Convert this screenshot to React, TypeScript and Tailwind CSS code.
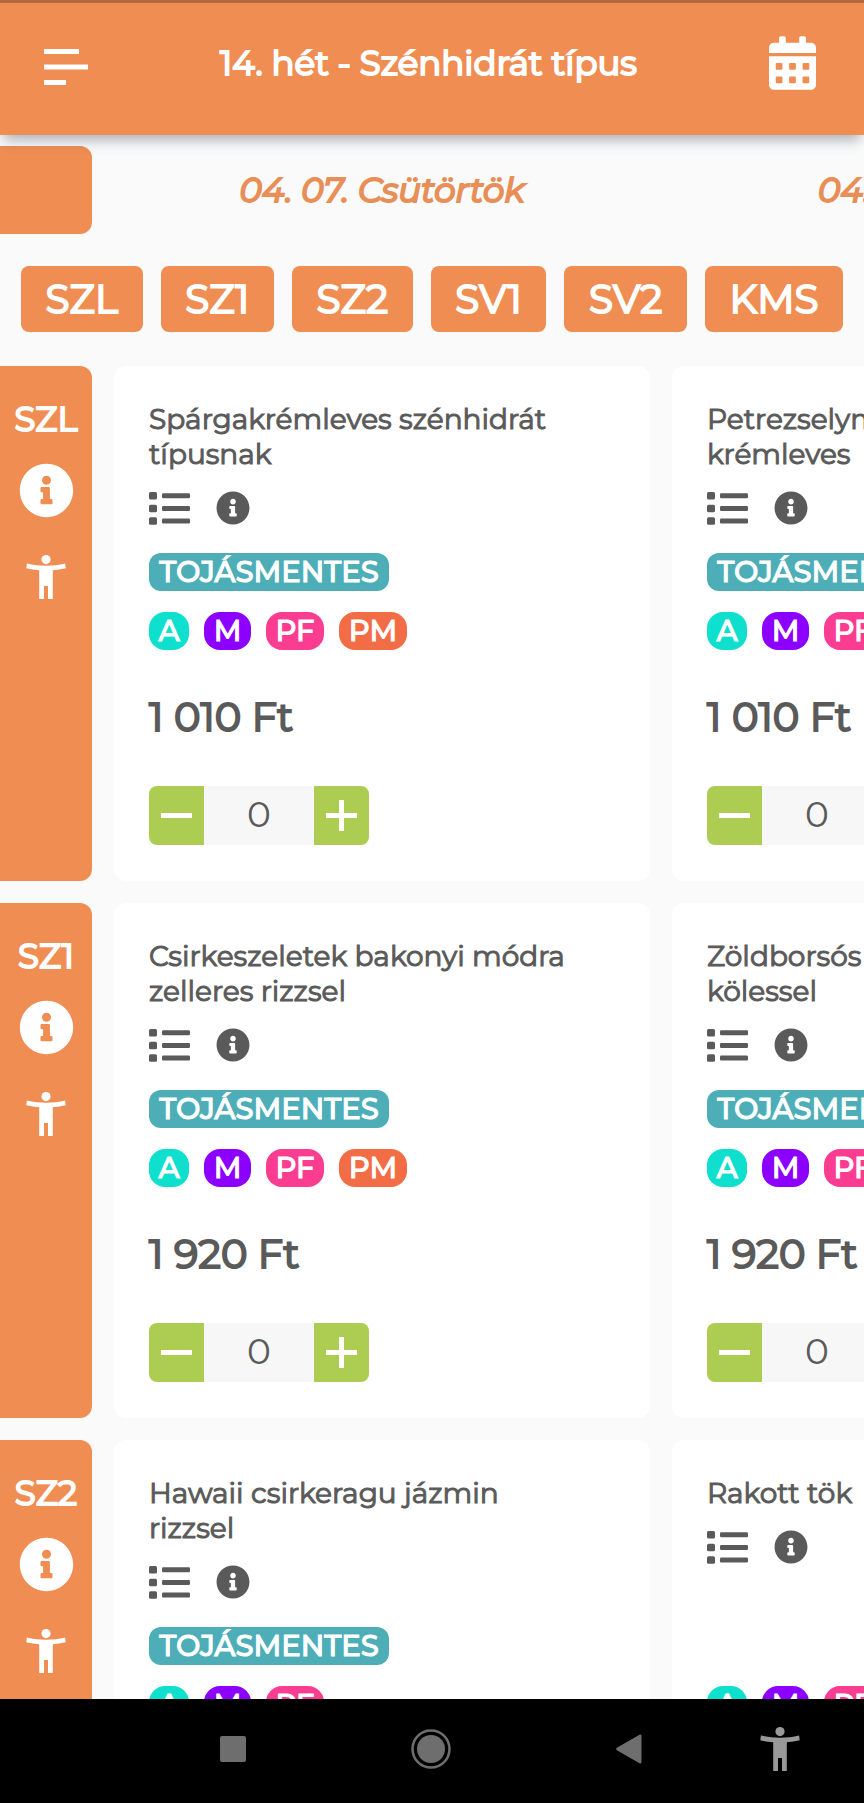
import { useState } from 'react'
import { FaCalendarAlt, FaInfoCircle } from 'react-icons/fa'

type Dish = {
  name: string
  price: string
  eggFree: boolean
  diets: Diet[]
}

type Diet = 'A' | 'M' | 'PF' | 'PM'

type MealRow = {
  code: string
  dishes: Dish[]
}

const days = ['04. 07. Csütörtök', '04. 08. Péntek']

const categories = ['SZL', 'SZ1', 'SZ2', 'SV1', 'SV2', 'KMS']

const dietStyles: Record<Diet, string> = {
  A: 'w-10 bg-[#0fdfcd]',
  M: 'w-[47px] bg-[#8b00ff]',
  PF: 'w-[58px] bg-[#fb3d92]',
  PM: 'w-[68px] bg-[#f26c45]',
}

const rows: MealRow[] = [
  {
    code: 'SZL',
    dishes: [
      { name: 'Spárgakrémleves szénhidrát típusnak', price: '1 010 Ft', eggFree: true, diets: ['A', 'M', 'PF', 'PM'] },
      { name: 'Petrezselymes zöldség krémleves', price: '1 010 Ft', eggFree: true, diets: ['A', 'M', 'PF', 'PM'] },
    ],
  },
  {
    code: 'SZ1',
    dishes: [
      { name: 'Csirkeszeletek bakonyi módra zelleres rizzsel', price: '1 920 Ft', eggFree: true, diets: ['A', 'M', 'PF', 'PM'] },
      { name: 'Zöldborsós csirkemell ragu kölessel', price: '1 920 Ft', eggFree: true, diets: ['A', 'M', 'PF', 'PM'] },
    ],
  },
  {
    code: 'SZ2',
    dishes: [
      { name: 'Hawaii csirkeragu jázmin rizzsel', price: '1 920 Ft', eggFree: true, diets: ['A', 'M', 'PF'] },
      { name: 'Rakott tök', price: '1 920 Ft', eggFree: false, diets: ['A', 'M', 'PF'] },
    ],
  },
]

function PersonIcon() {
  return (
    <svg viewBox="0 0 40 44" className="h-11 w-10" fill="currentColor" aria-hidden>
      <circle cx="20" cy="4.6" r="4.6" />
      <path d="M.9 8.6C13 11.6 27 11.6 39.1 8.6L39.7 13.3C35.5 14.3 31 14.9 26.8 15.2V44H22V31H18V44H13.2V15.2C9 14.9 4.5 14.3.3 13.3Z" />
    </svg>
  )
}

function ListIcon() {
  return (
    <svg viewBox="0 0 41 33" className="h-[33px] w-[41px]" fill="currentColor" aria-hidden>
      <rect x="0" y="0" width="8" height="7.5" rx="1.5" />
      <rect x="0" y="12.7" width="8" height="7.5" rx="1.5" />
      <rect x="0" y="25.3" width="8" height="7.5" rx="1.5" />
      <rect x="13" y="1.3" width="28" height="5" rx="1.2" />
      <rect x="13" y="14" width="28" height="5" rx="1.2" />
      <rect x="13" y="26.5" width="28" height="5" rx="1.2" />
    </svg>
  )
}

function Header() {
  return (
    <header className="relative z-10 flex h-[135px] shrink-0 items-center justify-between border-t-[3px] border-[#b5673f] bg-[#ef8d52] pr-12 pb-3 pl-11 text-white shadow-[0_9px_12px_-4px_rgba(70,90,100,0.45)]">
      <button type="button" aria-label="Menü" className="pt-2">
        <svg viewBox="0 0 44 36" className="h-9 w-11" fill="currentColor" aria-hidden>
          <rect width="35" height="5" />
          <rect y="15.5" width="44" height="5" />
          <rect y="31" width="22" height="5" />
        </svg>
      </button>
      <h1 className="text-[34px] [-webkit-text-stroke:2px]">14. hét - Szénhidrát típus</h1>
      <button type="button" aria-label="Naptár">
        <FaCalendarAlt className="h-[54px] w-[47px]" />
      </button>
    </header>
  )
}

function Stepper({ label }: { label: string }) {
  const [count, setCount] = useState(0)

  return (
    <div className="mt-[37px] flex h-[59px]">
      <button
        type="button"
        aria-label="Kevesebb"
        onClick={() => setCount(Math.max(0, count - 1))}
        className="flex w-[55px] items-center justify-center rounded-l-lg bg-[#adcd52] text-white"
      >
        <svg viewBox="0 0 31 31" className="size-[31px]" fill="currentColor" aria-hidden>
          <rect y="13" width="31" height="5" />
        </svg>
      </button>
      <input
        aria-label={`${label} mennyiség`}
        value={count}
        onChange={(e) => setCount(Number(e.target.value) || 0)}
        className="w-[110px] bg-[#f7f7f7] pb-1 text-center text-4xl text-[#5a5a5a]"
      />
      <button
        type="button"
        aria-label="Több"
        onClick={() => setCount(count + 1)}
        className="flex w-[55px] items-center justify-center rounded-r-lg bg-[#adcd52] text-white"
      >
        <svg viewBox="0 0 31 31" className="size-[31px]" fill="currentColor" aria-hidden>
          <rect y="13" width="31" height="5" />
          <rect x="13" width="5" height="31" />
        </svg>
      </button>
    </div>
  )
}

function DishCard({ dish }: { dish: Dish }) {
  return (
    <article className="flex w-[536px] shrink-0 flex-col rounded-xl bg-white py-9 pr-[70px] pl-[35px] text-[#5a5a5a]">
      <h2 className="text-[28px] leading-[35px] [-webkit-text-stroke:1px]">{dish.name}</h2>
      <div className="mt-[19px] flex items-center gap-[26px]">
        <button type="button" aria-label="Összetevők">
          <ListIcon />
        </button>
        <button type="button" aria-label="Információ">
          <FaInfoCircle className="size-[34px]" />
        </button>
      </div>
      {dish.eggFree && (
        <span className="mt-7 flex h-[38px] w-60 items-center justify-center rounded-xl bg-[#4daeb8] text-[29px] font-medium text-white [-webkit-text-stroke:1px]">
          TOJÁSMENTES
        </span>
      )}
      <div className="mt-auto">
        <div className="flex gap-[15px]">
          {dish.diets.map((diet) => (
            <span
              key={diet}
              className={`${dietStyles[diet]} flex h-[38px] items-center justify-center rounded-2xl text-[29px] font-medium text-white [-webkit-text-stroke:1px]`}
            >
              {diet}
            </span>
          ))}
        </div>
        <p className="mt-[35px] text-[40px] leading-16 [-webkit-text-stroke:2px]">{dish.price}</p>
        <Stepper label={dish.name} />
      </div>
    </article>
  )
}

function MealSection({ row }: { row: MealRow }) {
  return (
    <section className="flex h-[515px] shrink-0 gap-[22px]">
      <div className="flex w-[92px] shrink-0 flex-col items-center rounded-r-xl bg-[#ef8d52] pt-8 text-white">
        <span className="text-[34px] leading-[42px] [-webkit-text-stroke:2px]">{row.code}</span>
        <button type="button" aria-label="Információ" className="mt-[23px]">
          <FaInfoCircle className="size-[55px]" />
        </button>
        <button type="button" aria-label="Tápanyagok" className="mt-[37px]">
          <PersonIcon />
        </button>
      </div>
      {row.dishes.map((dish) => (
        <DishCard key={dish.name} dish={dish} />
      ))}
    </section>
  )
}

function SystemBar() {
  return (
    <nav className="grid h-[104px] shrink-0 grid-cols-[134fr_198fr_198fr_198fr_104fr_32fr] items-center justify-items-center bg-black pb-1 text-[#6e6e6e]">
      <span />
      <button type="button" aria-label="Áttekintés">
        <span className="block size-[26px] rounded-xs bg-current" />
      </button>
      <button type="button" aria-label="Kezdőképernyő">
        <svg viewBox="0 0 40 40" className="size-10" aria-hidden>
          <circle cx="20" cy="20" r="18.5" fill="none" stroke="currentColor" strokeWidth="2.5" />
          <circle cx="20" cy="20" r="14" fill="currentColor" />
        </svg>
      </button>
      <button type="button" aria-label="Vissza">
        <svg viewBox="0 0 26 30" className="h-[30px] w-[26px]" fill="currentColor" aria-hidden>
          <path d="M.8 13.8 23.5.7Q25.5 0 25.5 2V28Q25.5 30 23.5 29.3L.8 16.2Q-.5 15 .8 13.8Z" />
        </svg>
      </button>
      <button type="button" aria-label="Kisegítő lehetőségek" className="text-[#999]">
        <PersonIcon />
      </button>
    </nav>
  )
}

export default function App() {
  return (
    <div className="flex h-screen flex-col overflow-hidden bg-[#fafafa] font-['Montserrat','Inter',sans-serif]">
      <Header />
      <main className="flex min-h-0 flex-1 flex-col overflow-hidden pt-[11px]">
        <div className="flex h-[88px] shrink-0 gap-[22px]">
          <div className="w-[92px] shrink-0 rounded-r-xl bg-[#ef8d52]" />
          {days.map((day) => (
            <p
              key={day}
              className="flex w-[536px] shrink-0 items-center justify-center text-[34px] text-[#e88f58] italic [-webkit-text-stroke:2px]"
            >
              {day}
            </p>
          ))}
        </div>
        <div className="mt-8 flex shrink-0 gap-[18px] px-[21px]">
          {categories.map((category) => (
            <button
              key={category}
              type="button"
              className="h-[66px] grow rounded-lg bg-[#ef8d52] text-[39px] text-white [-webkit-text-stroke:2px]"
            >
              {category}
            </button>
          ))}
        </div>
        <div className="mt-[34px] flex flex-col gap-[22px]">
          {rows.map((row) => (
            <MealSection key={row.code} row={row} />
          ))}
        </div>
      </main>
      <SystemBar />
    </div>
  )
}
